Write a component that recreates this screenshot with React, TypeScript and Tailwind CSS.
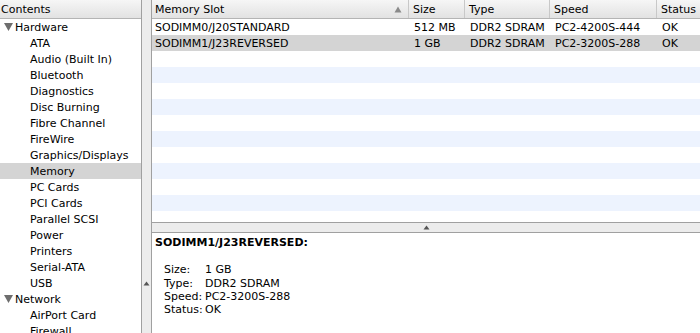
import React from "react";

const font = { fontFamily: '"DejaVu Sans", "Liberation Sans", sans-serif' };

const hw = [
  "ATA",
  "Audio (Built In)",
  "Bluetooth",
  "Diagnostics",
  "Disc Burning",
  "Fibre Channel",
  "FireWire",
  "Graphics/Displays",
  "Memory",
  "PC Cards",
  "PCI Cards",
  "Parallel SCSI",
  "Power",
  "Printers",
  "Serial-ATA",
  "USB",
];

function Tri() {
  return (
    <svg width="11" height="10" viewBox="0 0 11 10" className="shrink-0">
      <polygon points="1,1 10,1 5.5,9" fill="#6e6e6e" />
    </svg>
  );
}

function Dimple() {
  return (
    <svg width="7" height="5" viewBox="0 0 7 5">
      <polygon points="3.5,0.5 6.5,4.5 0.5,4.5" fill="#555" />
    </svg>
  );
}

const rows = [
  ["SODIMM0/J20STANDARD", "512 MB", "DDR2 SDRAM", "PC2-4200S-444", "OK"],
  ["SODIMM1/J23REVERSED", "1 GB", "DDR2 SDRAM", "PC2-3200S-288", "OK"],
];

const cols = "grid grid-cols-[257px_56px_85px_107px_1fr]";

export default function App() {
  return (
    <div
      className="w-[700px] h-[333px] overflow-hidden flex bg-white text-[11px] text-black leading-none"
      style={font}
    >
      {/* Sidebar */}
      <div className="w-[142px] shrink-0 flex flex-col border-r border-[#a0a0a0]">
        <div className="h-[19px] shrink-0 flex items-center pl-[1px] border-b border-[#b4b4b4] bg-gradient-to-b from-[#f6f6f6] to-[#e2e2e2]">
          Contents
        </div>
        <div className="flex flex-col">
          <div className="h-[16px] flex items-center pl-[3px]">
            <Tri />
            <span className="ml-[1px]">Hardware</span>
          </div>
          {hw.map((h) => (
            <div
              key={h}
              className={`h-[16px] flex items-center pl-[30px] ${h === "Memory" ? "bg-[#d4d4d4]" : ""}`}
            >
              {h}
            </div>
          ))}
          <div className="h-[16px] flex items-center pl-[3px]">
            <Tri />
            <span className="ml-[1px]">Network</span>
          </div>
          <div className="h-[16px] flex items-center pl-[30px]">AirPort Card</div>
          <div className="h-[16px] flex items-center pl-[30px]">Firewall</div>
        </div>
      </div>

      {/* Vertical splitter */}
      <div className="w-[10px] shrink-0 bg-[#ececec] border-r border-[#a0a0a0] flex flex-col items-center pt-[281px]">
        <Dimple />
      </div>

      {/* Right */}
      <div className="flex-1 flex flex-col min-w-0">
        <div className="h-[222px] shrink-0 flex flex-col overflow-hidden">
          <div className={`${cols} h-[19px] shrink-0 border-b border-[#b4b4b4] bg-gradient-to-b from-[#f6f6f6] to-[#e2e2e2]`}>
            <div className="flex items-center pl-[3px] pr-[6px] border-r border-[#c8c8c8]">
              <span className="flex-1">Memory Slot</span>
              <svg width="8" height="7" viewBox="0 0 8 7">
                <polygon points="4,0.5 7.5,6.5 0.5,6.5" fill="#8a8a8a" />
              </svg>
            </div>
            <div className="flex items-center pl-[4px] border-r border-[#c8c8c8]">Size</div>
            <div className="flex items-center pl-[4px] border-r border-[#c8c8c8]">Type</div>
            <div className="flex items-center pl-[4px] border-r border-[#c8c8c8]">Speed</div>
            <div className="flex items-center pl-[4px]">Status</div>
          </div>
          {Array.from({ length: 13 }).map((_, i) => {
            const r = rows[i];
            const bg = i === 1 ? "bg-[#d4d4d4]" : i % 2 === 1 ? "bg-[#edf3fe]" : "bg-white";
            return (
              <div key={i} className={`${cols} h-[16px] shrink-0 ${bg}`}>
                {r
                  ? r.map((c, j) => (
                      <div key={j} className={`flex items-center ${j === 0 ? "pl-[3px]" : "pl-[5px]"}`}>
                        {c}
                      </div>
                    ))
                  : null}
              </div>
            );
          })}
        </div>
        {/* Horizontal splitter */}
        <div className="h-[11px] shrink-0 bg-[#ececec] border-t border-b border-[#a0a0a0] flex items-center justify-center">
          <Dimple />
        </div>
        {/* Detail */}
        <div className="flex-1 pl-[3px] pt-[2px]">
          <div className="font-bold h-[15px] flex items-center">SODIMM1/J23REVERSED:</div>
          <div className="h-[13px]" />
          <div className="grid grid-cols-[41px_1fr] pl-[9px]">
            {[
              ["Size:", "1 GB"],
              ["Type:", "DDR2 SDRAM"],
              ["Speed:", "PC2-3200S-288"],
              ["Status:", "OK"],
            ].map(([k, v]) => (
              <React.Fragment key={k}>
                <div className="h-[13.4px] flex items-center">{k}</div>
                <div className="h-[13.4px] flex items-center">{v}</div>
              </React.Fragment>
            ))}
          </div>
        </div>
      </div>
    </div>
  );
}
